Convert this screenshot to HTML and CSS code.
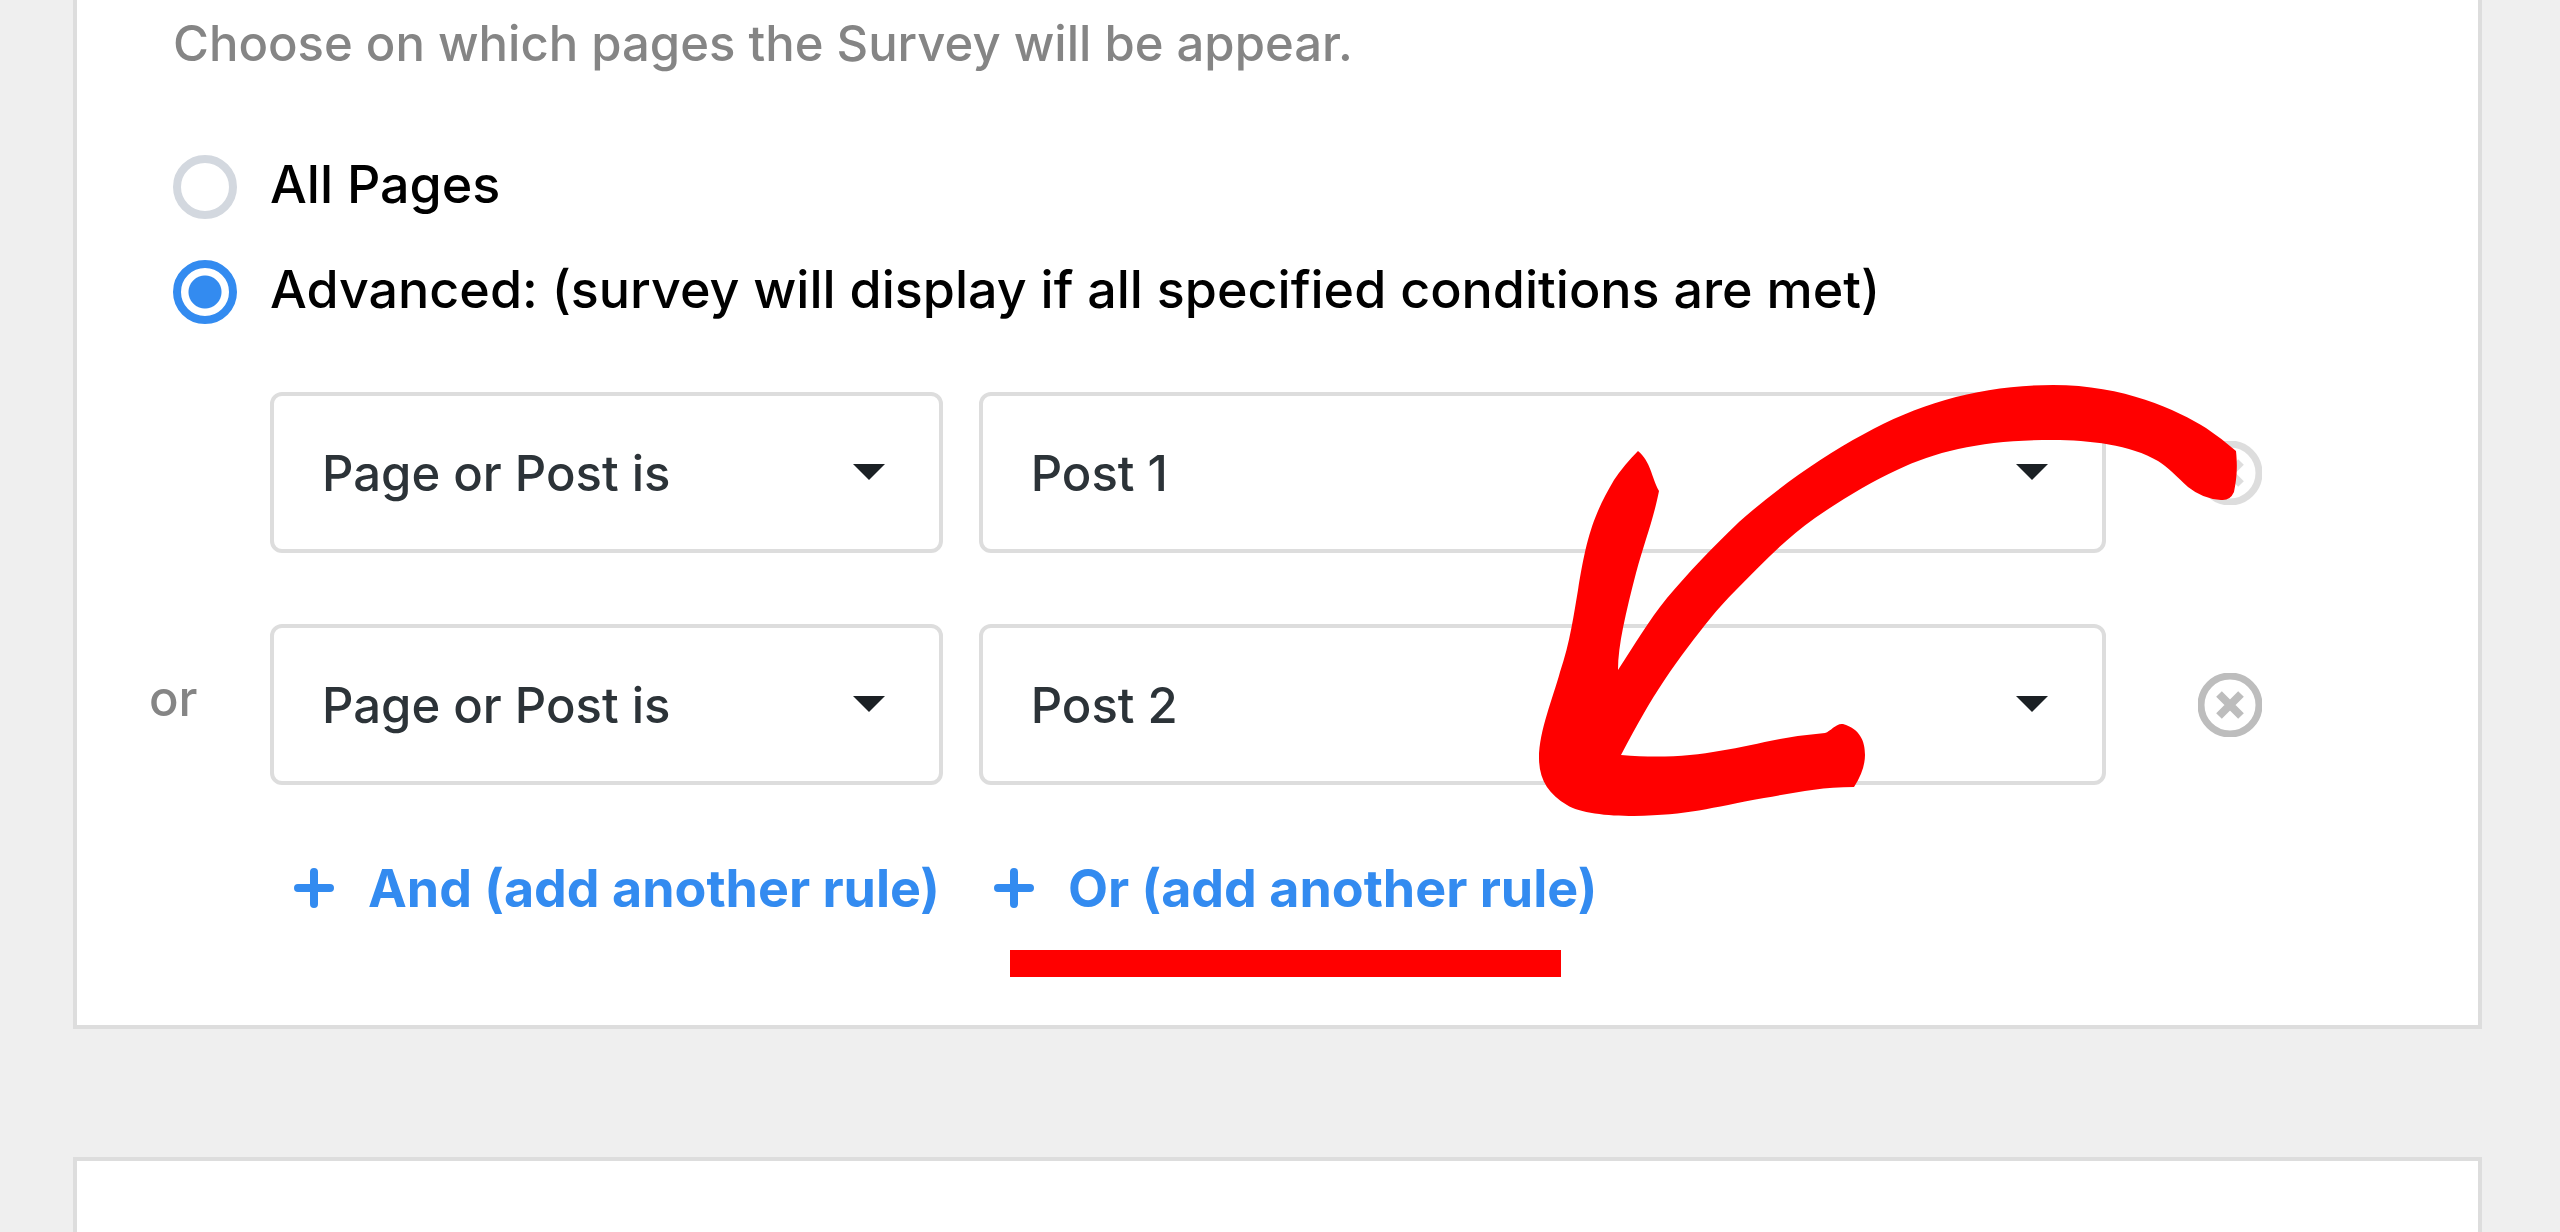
FILE: index.html
```html
<!DOCTYPE html>
<html lang="en">
<head>
  <meta charset="UTF-8">
  <meta name="viewport" content="width=device-width, initial-scale=1.0">
  <title>Survey Targeting</title>
  <link rel="stylesheet" href="styles.css">
</head>
<body>

  <!-- Page targeting -->
  <section class="card targeting">
    <p class="description">Choose on which pages the Survey will be appear.</p>

    <div class="options">
      <label class="option"><input type="radio" name="pages" value="all"> <span>All Pages</span></label>
      <label class="option"><input type="radio" name="pages" value="advanced" checked> <span>Advanced: (survey will display if all specified conditions are met)</span></label>
    </div>

    <div class="rules">
      <div class="rule">
        <span class="operator"></span>
        <div class="select">
          <select aria-label="Condition 1">
            <option>Page or Post is</option>
          </select>
          <svg class="caret" viewBox="0 0 32 16"><path d="M0 0h32L16 16z"/></svg>
        </div>
        <div class="select">
          <select aria-label="Post for condition 1">
            <option>Post 1</option>
          </select>
          <svg class="caret" viewBox="0 0 32 16"><path d="M0 0h32L16 16z"/></svg>
        </div>
        <button class="remove" aria-label="Remove rule 1" disabled>
          <svg viewBox="0 0 64 64"><circle cx="32" cy="32" r="29"/><path class="cross" d="M21 21l22 22M43 21l-22 22"/></svg>
        </button>
      </div>

      <div class="rule">
        <span class="operator">or</span>
        <div class="select">
          <select aria-label="Condition 2">
            <option>Page or Post is</option>
          </select>
          <svg class="caret" viewBox="0 0 32 16"><path d="M0 0h32L16 16z"/></svg>
        </div>
        <div class="select">
          <select aria-label="Post for condition 2">
            <option>Post 2</option>
          </select>
          <svg class="caret" viewBox="0 0 32 16"><path d="M0 0h32L16 16z"/></svg>
        </div>
        <button class="remove" aria-label="Remove rule 2">
          <svg viewBox="0 0 64 64"><circle cx="32" cy="32" r="29"/><path class="cross" d="M21 21l22 22M43 21l-22 22"/></svg>
        </button>
      </div>

      <!-- arrow that points to the Or link -->
      <svg class="arrow" viewBox="1539 384 700 432">
        <path d="M1639 451
          C1652 462 1652 476 1660 491
          C1654 521 1646 540 1637 573
          C1627 612 1619 645 1619 670
          C1634 647 1650 620 1668 598
          C1689 573 1712 549 1740 522
          C1775 491 1820 458 1865 434
          C1922 402 1985 385 2054 385
          C2125 385 2178 410 2207 428
          Q2222 438 2237 451
          C2239 470 2237 482 2235 492
          Q2231 501 2222 500
          Q2204 499 2189 487
          C2178 477 2169 467 2159 461
          C2132 445 2090 440 2054 440
          C1987 440 1940 450 1898 470
          C1870 483 1842 500 1816 518
          C1786 539 1763 564 1737 590
          C1718 609 1705 626 1689 647
          C1673 668 1657 692 1645 713
          Q1634 732 1622 755
          C1690 761 1730 749 1781 739
          Q1803 735 1826 733
          C1832 731 1837 723 1844 724
          C1861 729 1866 741 1866 755
          Q1866 770 1855 787
          C1820 787 1795 793 1765 798
          C1710 808 1690 815 1635 816
          C1608 816 1580 813 1568 805
          C1549 794 1540 779 1540 758
          C1540 731 1554 698 1561 672
          C1571 643 1575 613 1579 590
          C1587 541 1593 517 1615 480
          Q1625 465 1639 451z"/>
      </svg>
    </div>

    <div class="actions">
      <button class="add">
        <svg viewBox="0 0 40 40"><path d="M20 4v32M4 20h32"/></svg>
        <span>And (add another rule)</span>
      </button>
      <button class="add highlighted">
        <svg viewBox="0 0 40 40"><path d="M20 4v32M4 20h32"/></svg>
        <span>Or (add another rule)</span>
      </button>
    </div>
  </section>

  <!-- Next settings card -->
  <section class="card next"></section>

</body>
</html>
```
FILE: styles.css
```css
* { box-sizing: border-box; }
body {
  display: flex;
  flex-direction: column;
  gap: 128px;
  min-height: 100vh;
  margin: 0;
  padding: 0 78px 0 73px;
  background: #efefef;
  color: #000;
  font-family: 'Inter', 'Liberation Sans', sans-serif;
  font-size: 49px;
  font-weight: 500;
  line-height: 64px;
}
button, select { font: inherit; }
button { padding: 0; border: none; background: none; cursor: pointer; }

.card { background: #fff; border: 4px solid #ddd; }
.targeting { padding: 12px 216px 104px 96px; border-top: none; }
.next { flex: 1; border-bottom: none; }
.description { margin: 0; color: #858585; }

/* radio buttons */
.options {
  display: flex;
  flex-direction: column;
  gap: 41px;
  margin-top: 79px;
  font-size: 52px;
}
.option { display: flex; align-items: center; gap: 33px; height: 64px; }
.option span { padding-bottom: 4px; }
.option input {
  appearance: none;
  flex: none;
  width: 64px;
  height: 64px;
  margin: 0;
  border: 8px solid #d3d8df;
  border-radius: 50%;
}
.option input:checked {
  border-color: #338bf0;
  background: radial-gradient(circle, #338bf0 16px, #fff 17px);
}

/* rules */
.rules {
  position: relative;
  display: flex;
  flex-direction: column;
  gap: 71px;
  margin-top: 68px;
  margin-left: -24px;
}
.rule { display: flex; align-items: center; }
.operator { width: 121px; padding-bottom: 12px; color: #858585; }
.select { position: relative; flex: 37; }
.select + .select { flex: 62; margin-left: 36px; }
.select select {
  appearance: none;
  display: block;
  width: 100%;
  height: 161px;
  padding: 2px 120px 0 48px;
  border: 4px solid #ddd;
  border-radius: 12px;
  background: #fff;
  color: #2c3338;
}
.caret {
  position: absolute;
  top: 72px;
  right: 58px;
  width: 32px;
  height: 16px;
  fill: #1b2024;
  pointer-events: none;
}
.remove { width: 64px; height: 64px; margin-left: 92px; }
.remove:disabled { opacity: 0.5; }
.remove svg { display: block; fill: none; stroke: #bdbdbd; stroke-width: 7; }
.remove .cross { stroke-width: 8; }
.arrow {
  position: absolute;
  top: -8px;
  right: 24px;
  width: 700px;
  height: 432px;
  fill: #f00;
  pointer-events: none;
}

/* add links */
.actions { display: flex; gap: 54px; margin-top: 70px; margin-left: 121px; }
.add {
  display: flex;
  align-items: center;
  gap: 34px;
  color: #338bf0;
  font-size: 52px;
  font-weight: 700;
}
.add span { padding-top: 2px; }
.add svg {
  width: 40px;
  height: 40px;
  fill: none;
  stroke: #338bf0;
  stroke-width: 8;
  stroke-linecap: round;
}
.highlighted { position: relative; }
.highlighted::after {
  content: '';
  position: absolute;
  top: 95px;
  left: 16px;
  right: 36px;
  height: 27px;
  background: #f00;
}
```
